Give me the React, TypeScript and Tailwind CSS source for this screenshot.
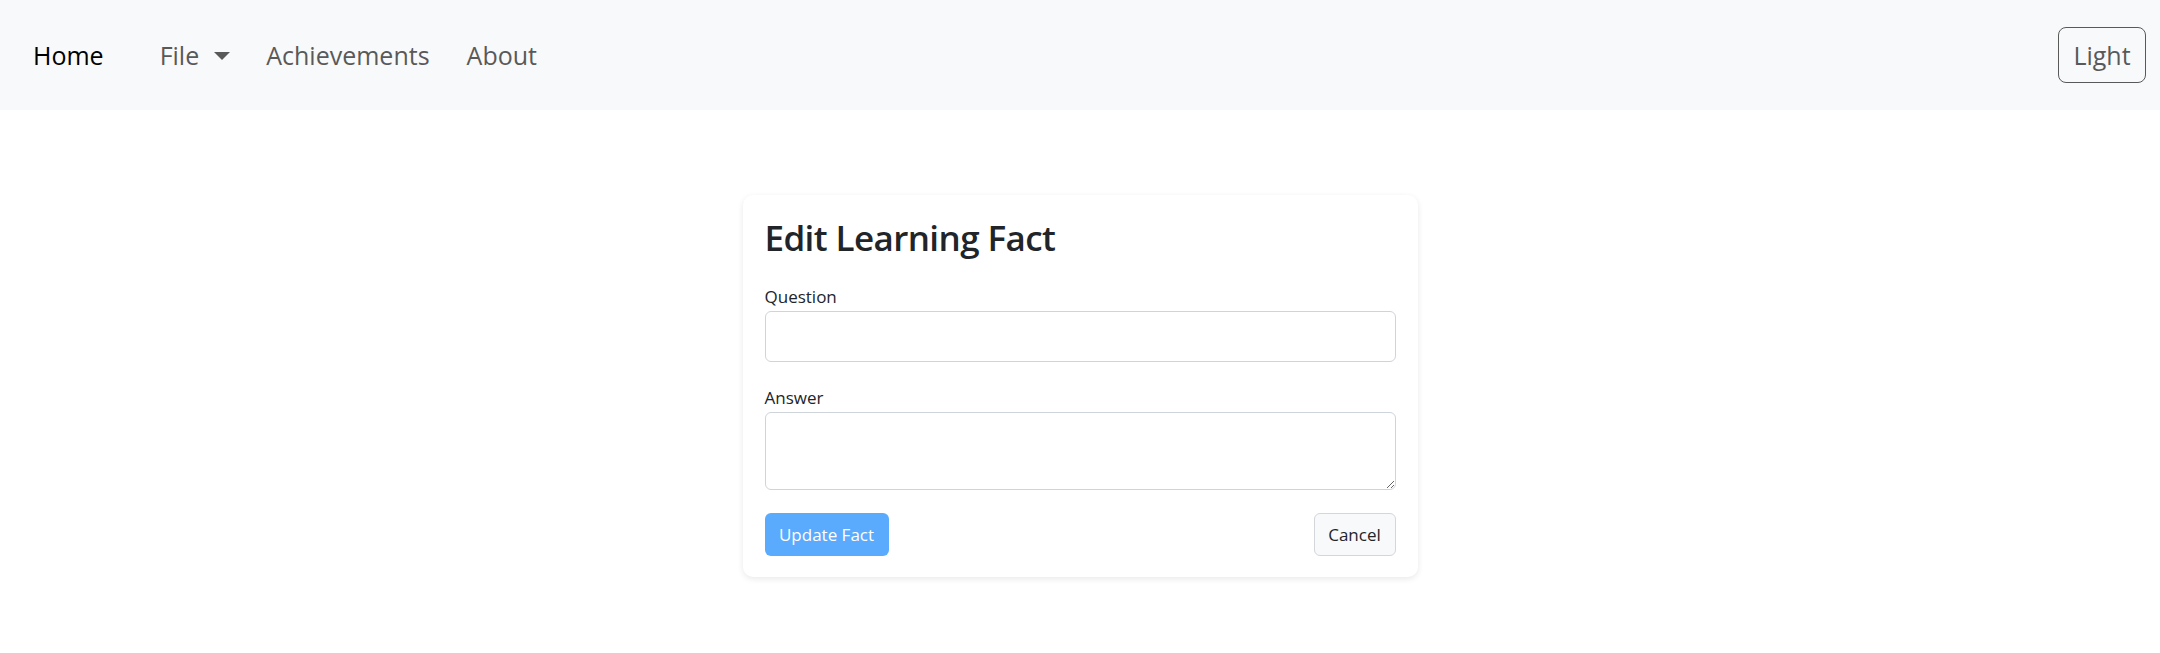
import { useState } from 'react'

const font = { fontFamily: '"Open Sans", "Noto Sans", Arial, sans-serif' }

const Navbar = ({ theme, onToggle }: { theme: string; onToggle: () => void }) => {
  return (
    <nav className="flex items-center justify-between h-[110px] bg-[#f8f9fa] pl-[33px] pr-[14px]">
      <div className="flex items-center">
        <a className="text-[25px] text-black leading-none mr-[38px]">Home</a>

        <button className="flex items-center px-[18px] text-[25px] text-[#595959] leading-none">
          File
          <svg className="ml-[15px] mt-[2px]" width="16" height="8" viewBox="0 0 16 8">
            <path d="M0 0 L16 0 L8 8 Z" fill="#595959" />
          </svg>
        </button>

        <a className="px-[18px] text-[25px] text-[#595959] leading-none">Achievements</a>
        <a className="pl-[19px] pr-[18px] text-[25px] text-[#595959] leading-none">About</a>
      </div>

      <button
        onClick={onToggle}
        className="h-[56px] w-[88px] border border-[#595959] rounded-[8px] text-[25px] text-[#595959] leading-none"
      >
        {theme}
      </button>
    </nav>
  )
}

const EditFact = () => {
  const [question, setQuestion] = useState('')
  const [answer, setAnswer] = useState('')

  return (
    <div className="w-[675px] mx-auto mt-[85px] bg-white rounded-[10px] shadow-[0_2px_6px_rgba(0,0,0,0.09)] px-[22px] pt-[22px] pb-[21px]">
      <h2 className="text-[35px] leading-[1.2] font-semibold tracking-[-0.6px] text-[#212529] mb-[25px]">
        Edit Learning Fact
      </h2>

      <label className="block text-[17px] leading-[26px] text-[#212529] mb-[1px]">Question</label>
      <input
        value={question}
        onChange={(e) => setQuestion(e.target.value)}
        className="block w-full h-[51px] border border-[#ced4da] rounded-[6px] px-3 text-[17px] outline-none"
      />

      <label className="block mt-[23px] text-[17px] leading-[26px] text-[#212529] mb-[1px]">Answer</label>
      <textarea
        value={answer}
        onChange={(e) => setAnswer(e.target.value)}
        className="block w-full h-[78px] border border-[#ced4da] rounded-[6px] px-3 py-2 text-[17px] outline-none"
      />

      <div className="flex items-center justify-between mt-[23px]">
        <button
          disabled
          className="h-[43px] w-[124px] rounded-[6px] bg-[#5aaafe] text-white text-[17px]"
        >
          Update Fact
        </button>
        <button className="h-[43px] w-[82px] rounded-[6px] bg-[#f8f9fa] border border-[#d3d6da] text-[#212529] text-[17px]">
          Cancel
        </button>
      </div>
    </div>
  )
}

export default function App() {
  const [theme, setTheme] = useState('Light')

  return (
    <div style={font} className="min-h-[653px] bg-white">
      <Navbar theme={theme} onToggle={() => setTheme(theme === 'Light' ? 'Dark' : 'Light')} />
      <EditFact />
    </div>
  )
}
